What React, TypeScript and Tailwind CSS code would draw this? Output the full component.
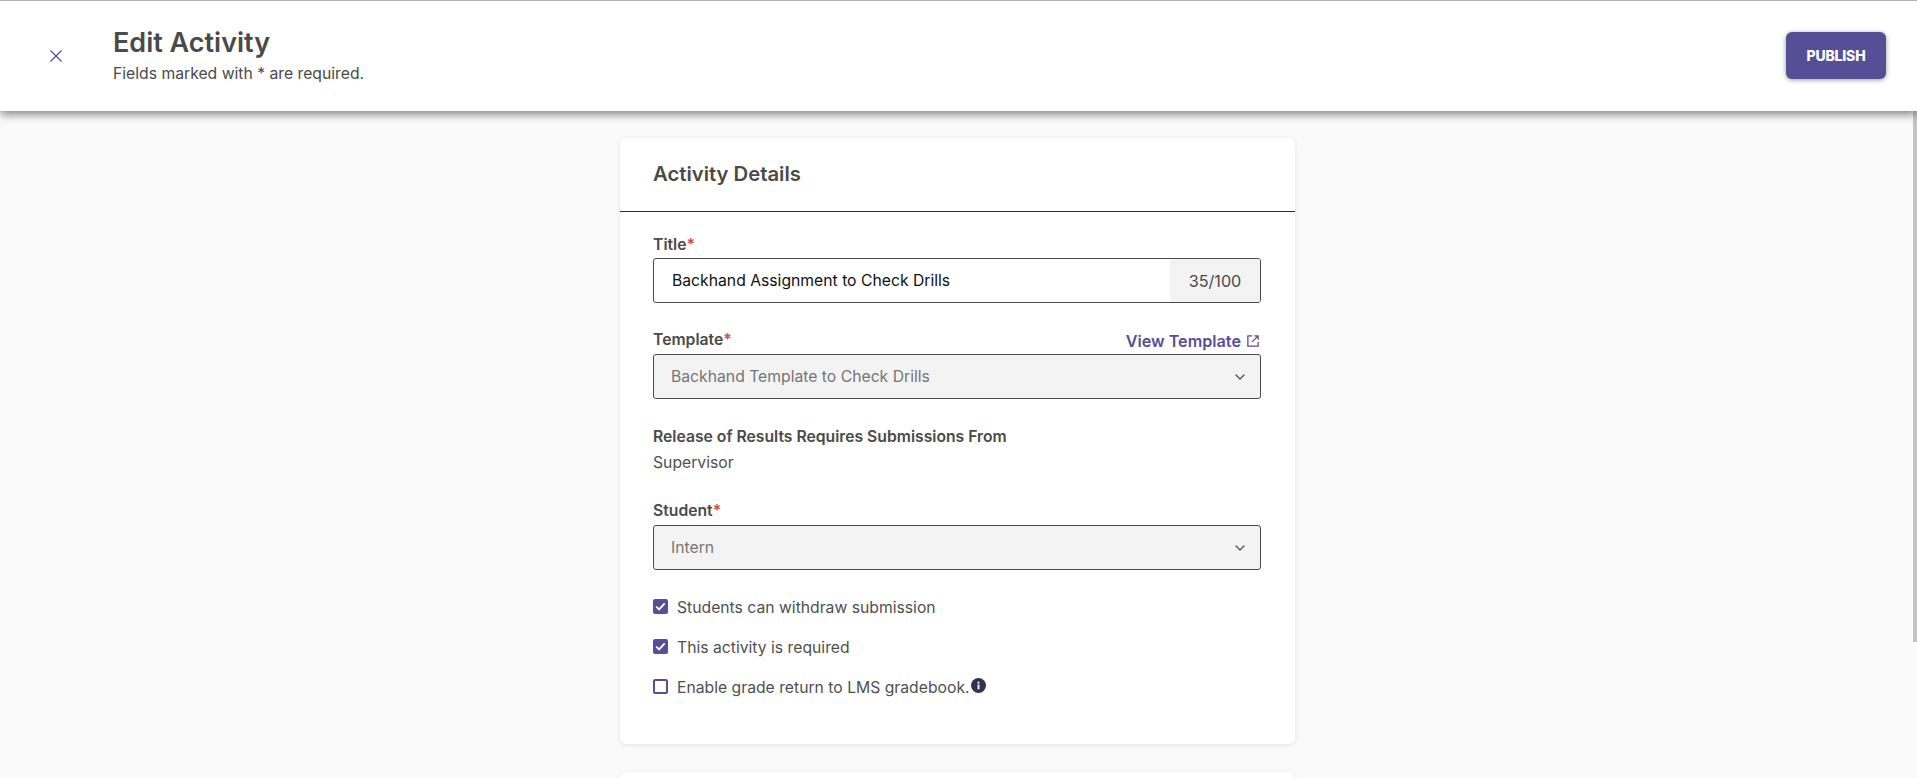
import React from 'react';
import { ChevronDown } from 'lucide-react';

const Required = () => <span className="text-[#c8504d]">*</span>;

const SelectBox = ({ value }: { value: string }) => (
    <div className="flex items-center justify-between h-[45px] pl-[17px] pr-[12px] bg-[#f3f3f3] border border-[#4a4a4a] rounded-[3px] text-[#757575]">
        <span>{value}</span>
        <ChevronDown className="w-[16px] h-[16px] text-[#555555]" strokeWidth={2} />
    </div>
);

const CheckRow = ({ checked, children }: { checked: boolean; children: React.ReactNode }) => (
    <div className="flex items-center gap-[9px] h-[40px]">
        {checked ? (
            <span className="flex items-center justify-center w-[15px] h-[15px] rounded-[2px] bg-[#574f96]">
                <svg viewBox="0 0 15 15" className="w-[15px] h-[15px]" fill="none" stroke="#ffffff" strokeWidth="1.8">
                    <path d="M3.2 7.6l2.9 2.8 5.6-6" />
                </svg>
            </span>
        ) : (
            <span className="w-[15px] h-[15px] rounded-[2px] border-2 border-[#574f96] bg-white" />
        )}
        <span className="pt-[3px] text-[#505050]">{children}</span>
    </div>
);

export default function App() {
    return (
        <div className="relative h-[778px] overflow-hidden bg-[#fafafa] text-[#4a4a4a] text-[15.73px] leading-[24px] font-['Inter',sans-serif]">
            {/* Top bar */}
            <header className="relative z-10 flex items-center justify-between h-[111px] pl-[50px] pr-[31px] bg-white border-t border-[#b0b0b0] shadow-[0_3px_9px_rgba(0,0,0,0.5)]">
                <div className="flex items-center">
                    <svg viewBox="0 0 12 12" className="w-[12px] h-[12px]" fill="none" stroke="#574f96" strokeWidth="1.3">
                        <path d="M0.5 0.5l11 11M11.5 0.5l-11 11" />
                    </svg>
                    <div className="ml-[51px]">
                        <h1 className="text-[27px] leading-[36px] font-semibold -mt-[1px]">Edit Activity</h1>
                        <p className="mt-[1px] leading-[24px]">Fields marked with * are required.</p>
                    </div>
                </div>
                <button className="w-[100px] h-[47px] -mt-[1px] rounded-[6px] bg-[#574f96] text-white text-[14px] font-extrabold tracking-[-0.2px] shadow-[0_1px_5px_rgba(0,0,0,0.4)]">
                    PUBLISH
                </button>
            </header>

            {/* Scrollbar thumb */}
            <div className="absolute right-0 top-[111px] w-[4px] h-[531px] bg-[#c4c4c4]" />

            <main className="flex flex-col items-center pt-[27px] pr-[2px] gap-[28px]">
                <section className="w-[675px] h-[606px] bg-white rounded-[6px] shadow-[0_1px_4px_rgba(0,0,0,0.1)]">
                    <div className="flex items-center h-[74px] pb-[2px] px-[33px] border-b border-[#2d2650]">
                        <h2 className="text-[20.3px] font-semibold">Activity Details</h2>
                    </div>
                    <div className="pl-[33px] pr-[34px] pt-[21px]">
                        <div className="h-[25px] font-semibold">Title<Required /></div>
                        <div className="flex h-[45px] border border-[#4a4a4a] rounded-[3px] overflow-hidden">
                            <div className="flex-1 flex items-center pl-[18px] text-[#111111]">Backhand Assignment to Check Drills</div>
                            <div className="flex items-center justify-center w-[90px] text-[16.2px] bg-[#f3f3f3]">35/100</div>
                        </div>

                        <div className="flex justify-between h-[26px] mt-[25px] font-semibold">
                            <span>Template<Required /></span>
                            <a className="flex items-center gap-[6px] -mt-[1px] text-[16.2px] text-[#574f96]">
                                View Template
                                <svg viewBox="0 0 14 14" className="w-[12px] h-[12px] mr-[2px]" fill="none" stroke="#574f96" strokeWidth="1.5" strokeLinejoin="round">
                                    <path d="M6 1H1v12h12V8M8.5 1H13v4.5M13 1L6 8" />
                                </svg>
                            </a>
                        </div>
                        <SelectBox value="Backhand Template to Check Drills" />

                        <div className="mt-[26px] font-semibold">Release of Results Requires Submissions From</div>
                        <div className="mt-[2px] text-[#505050]">Supervisor</div>

                        <div className="h-[26px] mt-[24px] font-semibold">Student<Required /></div>
                        <SelectBox value="Intern" />

                        <div className="mt-[16px]">
                            <CheckRow checked={true}>Students can withdraw submission</CheckRow>
                            <CheckRow checked={true}>This activity is required</CheckRow>
                            <CheckRow checked={false}>
                                <span className="inline-flex items-center">
                                    Enable grade return to LMS gradebook.
                                    <svg viewBox="0 0 16 16" className="w-[15px] h-[15px] ml-[1px] -mt-[5px]">
                                        <circle cx="8" cy="8" r="8" fill="#2f3350" />
                                        <rect x="7" y="7" width="2" height="5" fill="#ffffff" />
                                        <rect x="7" y="4" width="2" height="2" fill="#ffffff" />
                                    </svg>
                                </span>
                            </CheckRow>
                        </div>
                    </div>
                </section>
                <section className="w-[675px] h-[200px] shrink-0 bg-white rounded-[6px] shadow-[0_1px_4px_rgba(0,0,0,0.1)]" />
            </main>
        </div>
    );
}
